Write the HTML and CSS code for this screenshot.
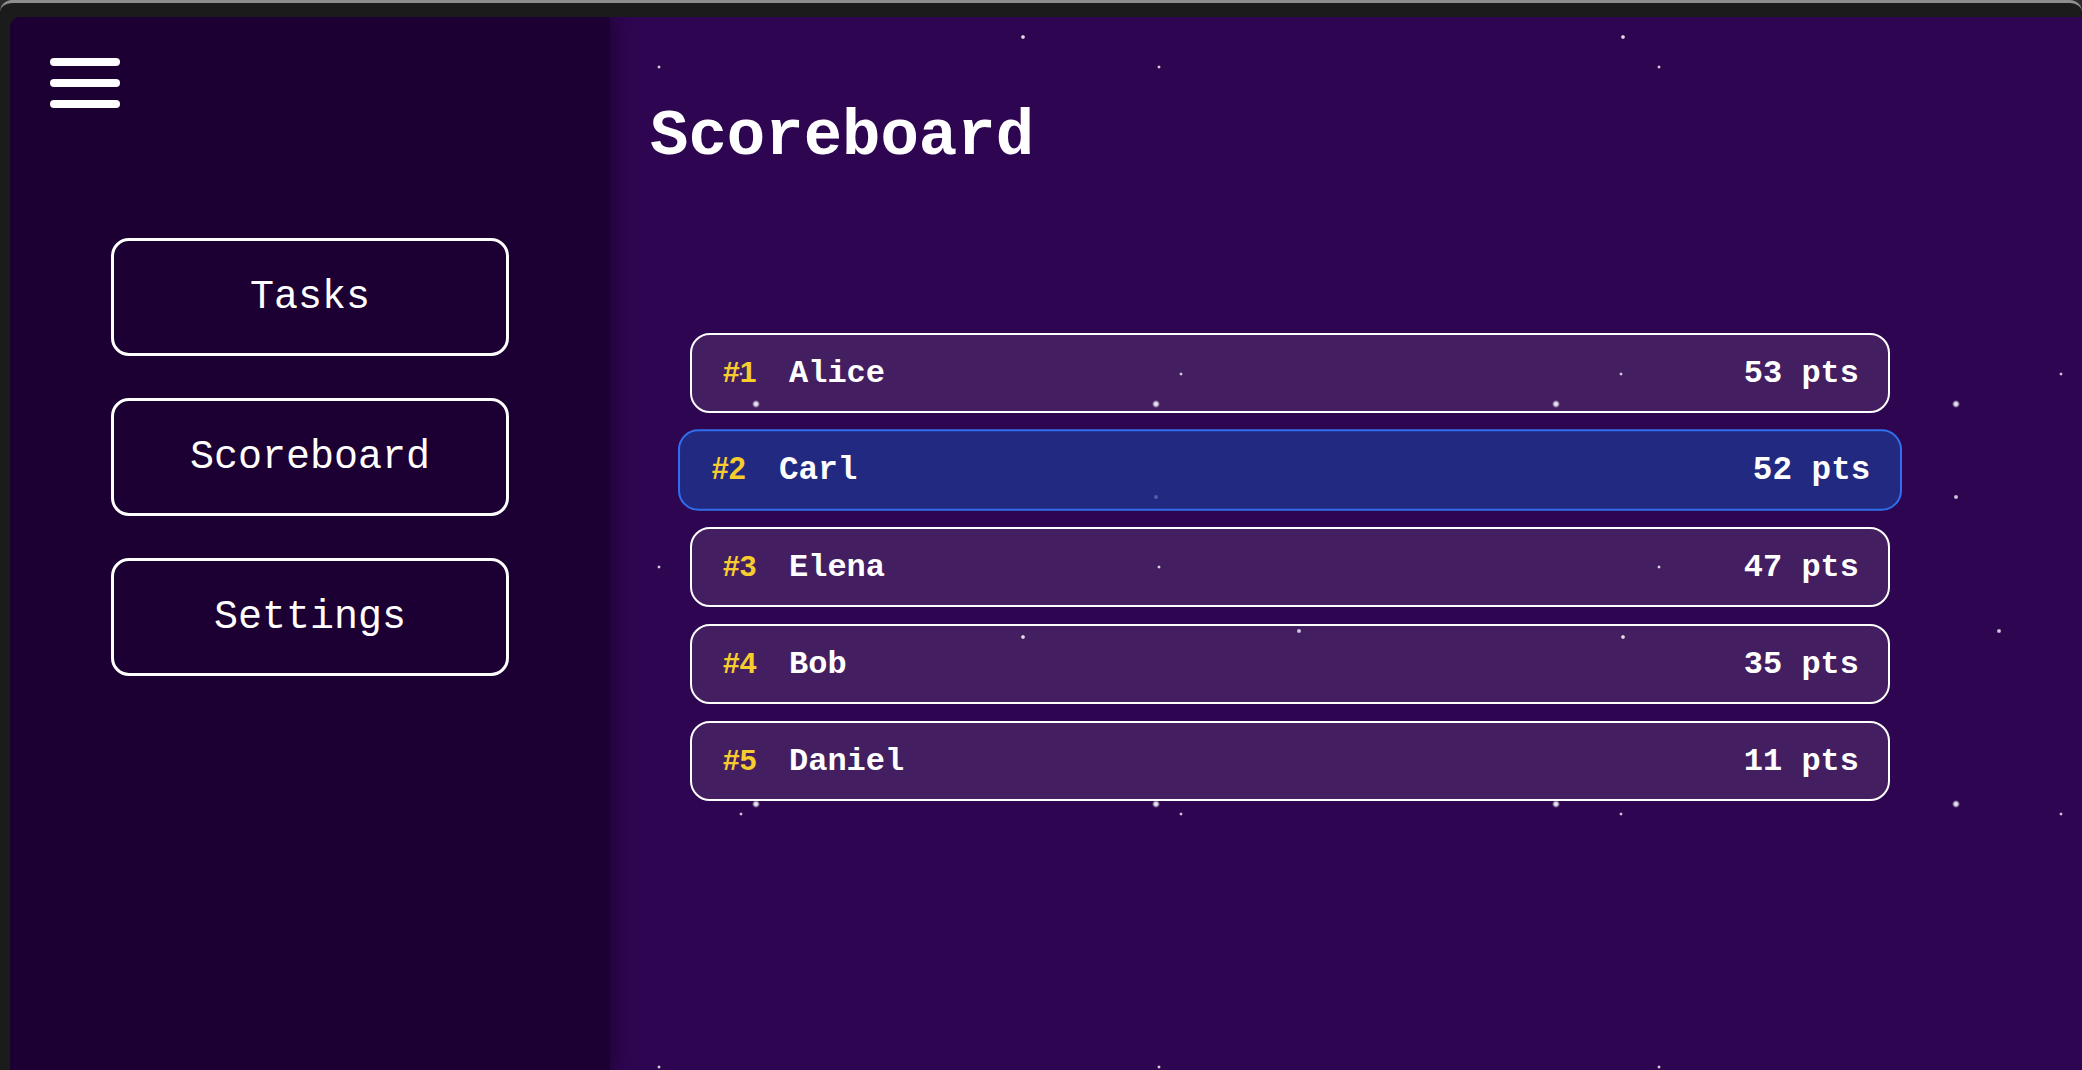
FILE: index.html
```html
<!DOCTYPE html>
<html lang="en">
<head>
<meta charset="utf-8">
<title>Scoreboard</title>
<link rel="stylesheet" href="styles.css">
</head>
<body>
<div class="window">
  <div class="app">
    <aside class="sidebar">
      <button class="hamburger" aria-label="Menu">
        <span class="bar"></span>
        <span class="bar"></span>
        <span class="bar"></span>
      </button>
      <nav class="nav">
        <a class="nav-btn" href="#">Tasks</a>
        <a class="nav-btn" href="#">Scoreboard</a>
        <a class="nav-btn" href="#">Settings</a>
      </nav>
    </aside>
    <main class="main">
      <h1 class="title">Scoreboard</h1>
      <ul class="board">
        <li class="row"><span class="who"><span class="rank">#1</span><span class="name">Alice</span></span><span class="pts">53 pts</span></li>
        <li class="row active"><span class="who"><span class="rank">#2</span><span class="name">Carl</span></span><span class="pts">52 pts</span></li>
        <li class="row"><span class="who"><span class="rank">#3</span><span class="name">Elena</span></span><span class="pts">47 pts</span></li>
        <li class="row"><span class="who"><span class="rank">#4</span><span class="name">Bob</span></span><span class="pts">35 pts</span></li>
        <li class="row"><span class="who"><span class="rank">#5</span><span class="name">Daniel</span></span><span class="pts">11 pts</span></li>
      </ul>
    </main>
  </div>
</div>
</body>
</html>
```

FILE: styles.css
```css
html, body {
  margin: 0;
  padding: 0;
  height: 100%;
}

body {
  background: #2a2a2a;
  overflow: hidden;
  font-family: "Liberation Mono", "Courier New", monospace;
}

.window {
  box-sizing: border-box;
  height: 1070px;
  background: #1b1b1b;
  border-top: 3px solid #8e8e8e;
  border-radius: 12px 12px 0 0;
  padding: 14px 0 0 10px;
  display: flex;
}

.app {
  flex: 1;
  display: flex;
  border-top-left-radius: 10px;
  overflow: hidden;
}

.sidebar {
  width: 600px;
  flex: 0 0 600px;
  background: #1c0033;
  position: relative;
  z-index: 2;
  box-shadow: 2px 0 16px rgba(0, 0, 0, 0.45);
  padding-top: 41px;
  display: flex;
  flex-direction: column;
}

.hamburger {
  margin-left: 40px;
  width: 70px;
  padding: 0;
  border: 0;
  background: transparent;
  display: flex;
  flex-direction: column;
  gap: 13px;
  cursor: pointer;
}

.bar {
  display: block;
  width: 70px;
  height: 8px;
  border-radius: 4px;
  background: #ffffff;
}

.nav {
  margin-top: 130px;
  display: flex;
  flex-direction: column;
  align-items: center;
  gap: 42px;
}

.nav-btn {
  box-sizing: border-box;
  width: 398px;
  height: 118px;
  border: 3px solid #ffffff;
  border-radius: 18px;
  display: flex;
  align-items: center;
  justify-content: center;
  color: #ffffff;
  text-decoration: none;
  font-family: "Liberation Mono", "Courier New", monospace;
  font-size: 40px;
}

.main {
  flex: 1;
  padding: 88px 40px 0 40px;
  background-color: #2e0550;
  background-image:
    radial-gradient(circle at 49px 50px, rgba(255,255,255,0.8) 0, rgba(255,255,255,0.8) 1px, transparent 1.8px),
    radial-gradient(circle at 413px 20px, rgba(255,255,255,0.85) 0, rgba(255,255,255,0.85) 1.3px, transparent 2.3px),
    radial-gradient(circle at 146px 387px, rgba(255,255,255,0.95) 0, rgba(255,255,255,0.8) 1.8px, rgba(255,255,255,0.25) 3.2px, transparent 4px),
    radial-gradient(circle at 546px 480px, rgba(255,255,255,0.85) 0, rgba(255,255,255,0.7) 1.4px, transparent 2.5px),
    radial-gradient(circle at 689px 614px, rgba(255,255,255,0.85) 0, rgba(255,255,255,0.7) 1.4px, transparent 2.5px),
    radial-gradient(circle at 131px 357px, rgba(255,255,255,0.75) 0, rgba(255,255,255,0.75) 1px, transparent 1.8px);
  background-size:
    500px 500px,
    600px 600px,
    400px 400px,
    800px 800px,
    700px 700px,
    440px 440px;
  background-repeat: repeat;
}

.title {
  margin: 0;
  font-family: "Liberation Mono", "Courier New", monospace;
  font-weight: 700;
  font-size: 64px;
  line-height: 64px;
  color: #ffffff;
}

.board {
  list-style: none;
  margin: 164px 0 0 40px;
  padding: 0;
  width: 1200px;
  display: flex;
  flex-direction: column;
  gap: 17px;
}

.row {
  box-sizing: border-box;
  height: 80px;
  border: 2px solid #ffffff;
  border-radius: 20px;
  background: rgba(255, 255, 255, 0.1);
  display: flex;
  align-items: center;
  padding: 0 29px 0 31px;
  color: #ffffff;
}

.row.active {
  background: rgba(30, 55, 147, 0.72);
  border-color: #2f6fec;
  transform: scale(1.02);
}

.who {
  display: flex;
  align-items: baseline;
}

.rank {
  width: 66px;
  flex: 0 0 66px;
  font-family: "Liberation Sans", Arial, sans-serif;
  font-weight: 700;
  font-size: 30px;
  color: #f7cd2e;
}

.name {
  font-family: "Liberation Mono", "Courier New", monospace;
  font-weight: 700;
  font-size: 32px;
}

.pts {
  margin-left: auto;
  font-family: "Liberation Mono", "Courier New", monospace;
  font-weight: 700;
  font-size: 32px;
}
```
